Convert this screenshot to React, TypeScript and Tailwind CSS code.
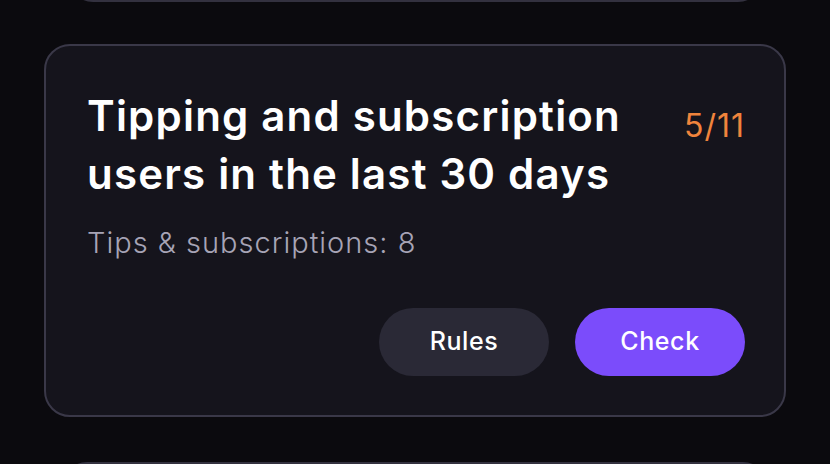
export default function App() {
  return (
    <div className="h-[464px] w-[830px] overflow-hidden bg-[#0b0a0e] flex flex-col items-center font-['Inter',sans-serif]">
      {/* previous card in the stack, mostly scrolled off */}
      <div className="w-[693px] h-[100px] -mt-[98px] shrink-0 rounded-[24px] border-2 border-[#33313f] bg-[#15141b]" />

      <div className="mt-[42px] w-[742px] h-[373px] shrink-0 rounded-[26px] border-2 border-[#3a3848] bg-[#15141c] pl-[41px] pr-[39px] pt-[41px] flex flex-col">
        <div className="flex items-start justify-between">
          <h2 className="text-[42px] leading-[58px] font-semibold text-white tracking-[1.2px]">
            Tipping and subscription
            <br />
            users in the last 30 days
          </h2>
          <span className="mt-[19px] text-[32px] leading-[40px] text-[#f0843c] tracking-[1px]">5/11</span>
        </div>
        <p className="mt-[22px] text-[29px] leading-[36px] font-light text-[#a7a4b6] tracking-[1px]">Tips &amp; subscriptions: 8</p>
        <div className="mt-auto mb-[39px] flex justify-end gap-[26px]">
          <button className="w-[170px] h-[68px] rounded-full bg-[#2a2936] text-white text-[25px] font-medium tracking-[0.6px]">Rules</button>
          <button className="w-[170px] h-[68px] rounded-full bg-[#7b4cfb] text-white text-[25px] font-medium tracking-[0.6px]">Check</button>
        </div>
      </div>

      <div className="mt-[45px] w-[704px] h-[100px] shrink-0 rounded-[24px] border-2 border-[#33313f] bg-[#15141b]" />
    </div>
  );
}
